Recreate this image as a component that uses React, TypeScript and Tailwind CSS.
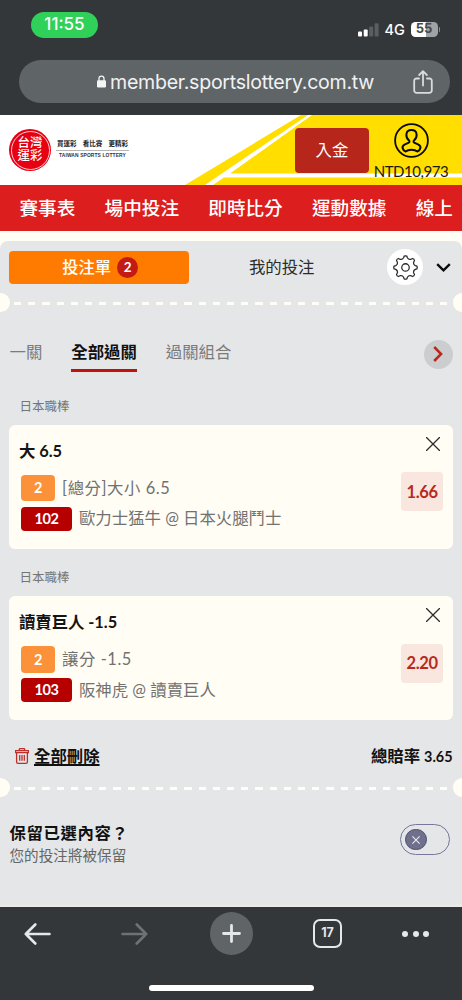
import { Fragment } from "react";
import { clsx } from "clsx";

type Bet = {
  id: string;
  league: string;
  pick: string;
  market: string;
  count: string;
  code: string;
  match: string;
  odds: string;
};

const bets: Bet[] = [
  {
    id: "102",
    league: "日本職棒",
    pick: "大 6.5",
    market: "[總分]大小 6.5",
    count: "2",
    code: "102",
    match: "歐力士猛牛 @ 日本火腿鬥士",
    odds: "1.66",
  },
  {
    id: "103",
    league: "日本職棒",
    pick: "讀賣巨人 -1.5",
    market: "讓分 -1.5",
    count: "2",
    code: "103",
    match: "阪神虎 @ 讀賣巨人",
    odds: "2.20",
  },
];

const navItems = ["賽事表", "場中投注", "即時比分", "運動數據", "線上"];

// 8-tooth gear outline, one tooth every 45 degrees
function gearPath() {
  const points: string[] = [];
  for (let i = 0; i < 8; i++) {
    const a = (i * Math.PI) / 4;
    const at = (r: number, d: number) =>
      `${(12 + r * Math.sin(a + d)).toFixed(2)} ${(12 - r * Math.cos(a + d)).toFixed(2)}`;
    points.push(
      `${i === 0 ? "M" : "L"}${at(11, -0.12)}`,
      `Q${at(11.6, 0)} ${at(11, 0.12)}`,
      `L${at(9.5, 0.19)}`,
      `Q${at(7.8, 0.39)} ${at(9.5, 0.595)}`,
    );
  }
  return points.join(" ") + "Z";
}

function StatusBar() {
  return (
    <div className="flex h-[60px] items-start justify-between pl-[31px] pr-[22px] pt-[12px] font-['Inter',sans-serif] text-white">
      <div className="flex h-[26px] w-[67px] items-center justify-center rounded-full bg-[#30d158] text-[17px] font-medium">
        11:55
      </div>
      <div className="mt-[9px] flex h-4 items-center">
        <svg className="h-[15px] w-[21px]" viewBox="0 0 21 15">
          <rect x="0" y="9.5" width="4" height="5" rx="1" fill="#fff" />
          <rect x="5.7" y="7.5" width="4" height="7" rx="1" fill="#fff" />
          <rect x="11.2" y="4.5" width="4" height="10" rx="1" fill="#5b5e60" />
          <rect x="16.6" y="1.2" width="4" height="13.3" rx="1" fill="#5b5e60" />
        </svg>
        <span className="ml-[6px] w-[26px] pt-px text-[14.5px] font-medium leading-4">4G</span>
        <div className="flex h-[15px] w-[27px] items-center justify-center rounded-[4.5px] bg-[linear-gradient(90deg,#fff_55%,#a0a2a3_55%)] text-[13px] font-bold text-[#45494b]">
          55
        </div>
        <div className="ml-[1px] h-[5px] w-[1.5px] rounded-r-full bg-[#8d8f91]" />
      </div>
    </div>
  );
}

function AddressBar() {
  return (
    <div className="ml-[19px] mr-[12px] flex h-[43px] items-center rounded-full bg-[#5f6467] pl-[78px] pr-[17px] font-['Inter',sans-serif]">
      <svg className="h-[13px] w-[9px]" viewBox="0 0 9 13">
        <path d="M2 6V3.6a2.5 2.5 0 0 1 5 0V6" fill="none" stroke="#f4f5f5" strokeWidth="1.3" />
        <rect x="0" y="5.3" width="9" height="7.2" rx="1.2" fill="#f4f5f5" />
      </svg>
      <span className="ml-[4px] flex-1 whitespace-nowrap text-[19.6px] leading-6 tracking-[-0.27px] text-[#f1f2f2]">
        member.sportslottery.com.tw
      </span>
      <svg
        className="h-[24px] w-[20px]"
        viewBox="0 0 20 24"
        fill="none"
        stroke="#d9dbdd"
        strokeWidth="1.8"
        strokeLinecap="round"
        strokeLinejoin="round"
      >
        <path d="M6 8.5H3.6A2.4 2.4 0 0 0 1.2 11v9.4a2.4 2.4 0 0 0 2.4 2.4h12.8a2.4 2.4 0 0 0 2.4-2.4V11a2.4 2.4 0 0 0-2.4-2.5H14" />
        <path d="M10 15.5V1.4M6.2 5 10 1.2 13.8 5" />
      </svg>
    </div>
  );
}

function SiteHeader() {
  return (
    <header className="relative h-[70px] bg-white">
      <svg className="absolute inset-0 h-[70px] w-[462px]" viewBox="0 0 462 70">
        <path d="M185 70 301 0H462V70Z" fill="#ffde00" />
        <path d="M205 70 308 0H312L230 58.5H462V62.5H224L213 70Z" fill="#fff" />
      </svg>
      <div className="relative flex h-full items-start pl-[9px]">
        <div className="mt-[14px] flex size-[42px] items-center justify-center rounded-full bg-[#e60012]">
          <div className="flex size-[39px] items-center justify-center rounded-full border border-white/80">
            <p className="w-[25px] text-center text-[12.4px] font-medium leading-[12.6px] text-white">
              台灣運彩
            </p>
          </div>
        </div>
        <div className="ml-[5px] mt-[25px] flex w-[73px] flex-col items-center whitespace-nowrap">
          <div className="flex h-[10px] w-[71px] justify-between text-[6.5px] font-bold leading-[8px] text-[#222]">
            <span>買運彩</span>
            <span>看比賽</span>
            <span>更精彩</span>
          </div>
          <div className="h-px w-full bg-[#b5b5b5]" />
          <span className="mt-[1px] font-['Liberation_Sans',sans-serif] text-[4.9px] font-bold leading-[7px] tracking-[0.12px] text-[#333]">
            TAIWAN SPORTS LOTTERY
          </span>
        </div>
        <button
          type="button"
          className="ml-[166px] mt-[12.5px] flex h-[45px] w-[74px] shrink-0 items-center justify-center rounded-[4px] bg-[#b6261b] text-[16.4px] text-white"
        >
          入金
        </button>
        <div className="ml-[2px] mt-[8px] flex w-[80px] flex-col items-center">
          <svg className="size-[35px]" viewBox="0 0 35 35" fill="none" stroke="#0a0a0a">
            <circle cx="17.5" cy="17.5" r="16.4" strokeWidth="1.8" />
            <path
              d="M15 17.6c-1.7-1.5-2.9-3.7-2.6-6.3.3-2.5 2.3-4.2 5.1-4.2s4.8 1.700 5.100 4.200c.3 2.600-.9 4.800-2.600 6.300-.7.6-.6 1.700.2 2.100l3.800 1.700c1.900.9 2.900 2.200 2.300 4-.6 2-1.500 2.700-2.900 3.100-1.600-1.300-3.600-1.800-5.900-1.800s-4.300.5-5.900 1.800c-1.400-.4-2.300-1.100-2.900-3.100-.6-1.800.4-3.100 2.300-4l3.800-1.700c.8-.4.9-1.500.2-2.100Z"
              strokeWidth="2"
              strokeLinejoin="round"
            />
          </svg>
          <span className="text-[15px] leading-[26px] tracking-[-0.45px] text-[#1a1a00]">NTD10,973</span>
        </div>
      </div>
    </header>
  );
}

function NavBar() {
  return (
    <nav className="flex h-[46px] items-center gap-[29.3px] overflow-hidden whitespace-nowrap bg-[#dc1e1e] pl-[19.5px] pt-[1px] text-[18.6px] font-medium text-white">
      {navItems.map((item) => (
        <span key={item}>{item}</span>
      ))}
    </nav>
  );
}

// Ticket-style tear line with a half circle cut out on each side
function TearLine() {
  return (
    <div className="flex h-[19px] items-center justify-between">
      <div className="h-[19px] w-[9.5px] rounded-r-full bg-[#fffdf4]" />
      <div className="ml-[4.5px] mt-[2px] h-[2.5px] flex-1 bg-[repeating-linear-gradient(90deg,#fffdf4_0_7.2px,transparent_7.2px_14.2px)]" />
      <div className="h-[19px] w-[9.5px] rounded-l-full bg-[#fffdf4]" />
    </div>
  );
}

function BetCard({ bet }: { bet: Bet }) {
  return (
    <div className="mx-[9.4px] flex h-[124px] justify-between rounded-[6px] bg-[#fffdf4] pl-[9.6px] pr-[9.5px]">
      <div className="flex flex-col items-start whitespace-nowrap">
        <h3 className="mt-[14px] h-[24px] text-[16.4px] font-bold leading-[24px] tracking-[-0.05px] text-[#151515]">
          {bet.pick}
        </h3>
        <div className="ml-[2px] mt-[12px] flex h-[27px] items-center">
          <span className="flex h-[26.5px] w-[34.5px] items-center justify-center rounded-[4px] bg-[#fb923a] text-[14.5px] font-bold text-white">
            {bet.count}
          </span>
          <span className="ml-[6.6px] text-[16.4px] tracking-[0.55px] text-[#717171]">{bet.market}</span>
        </div>
        <div className="ml-[2px] mt-[5px] flex h-[24px] items-center">
          <span className="flex h-[24px] w-[51px] items-center justify-center rounded-[4px] bg-[#b60000] text-[14.5px] font-bold tracking-[-0.4px] text-white">
            {bet.code}
          </span>
          <span className="ml-[7px] text-[16.4px] text-[#717171]">{bet.match}</span>
        </div>
      </div>
      <div className="flex flex-col items-end">
        <svg
          className="mr-[3px] mt-[12px] size-[14px]"
          viewBox="0 0 14 14"
          stroke="#2b2b2b"
          strokeWidth="1.3"
          strokeLinecap="round"
        >
          <path d="m.5.5 13 13M13.5.5l-13 13" />
        </svg>
        <div className="mt-[21.5px] flex h-[39px] w-[42px] items-center justify-center rounded-[4px] bg-[#f8e6df] pt-px text-[16.5px] font-bold tracking-[-0.3px] text-[#b8291e]">
          {bet.odds}
        </div>
      </div>
    </div>
  );
}

function BetSlip() {
  const tabs = ["一關", "全部過關", "過關組合"];
  const activeTab = "全部過關";

  return (
    <main className="h-[676px] bg-[#fffdf4] pt-[10px]">
      <div className="flex h-[666px] flex-col rounded-t-[8px] bg-[#e4e6e8]">
        <div className="flex h-[52px] items-center pl-[9.4px]">
          <div className="flex h-[33px] w-[179.5px] items-center justify-center gap-[6px] rounded-[4px] bg-[#ff7b00] pl-[2px] text-[16.3px] font-medium text-white">
            投注單
            <span className="flex size-[21px] items-center justify-center rounded-full bg-[#c41a14] text-[13.5px] font-bold">
              2
            </span>
          </div>
          <span className="ml-[60px] w-[138.2px] text-[16.4px] text-[#2c2c2c]">我的投注</span>
          <div className="flex size-[36px] items-center justify-center rounded-full bg-white">
            <svg
              className="size-[25px]"
              viewBox="0 0 24 24"
              fill="none"
              stroke="#2a2a2a"
              strokeWidth="1.2"
              strokeLinejoin="round"
            >
              <path d={gearPath()} />
              <circle cx="12" cy="12" r="3.6" />
            </svg>
          </div>
          <svg
            className="ml-[13px] h-[9px] w-[15px]"
            viewBox="0 0 15 9"
            fill="none"
            stroke="#0c0c0c"
            strokeWidth="2.4"
          >
            <path d="M1.2 1.2 7.5 7.3 13.8 1.2" />
          </svg>
        </div>
        <TearLine />

        {/* Parlay tabs */}
        <div className="mt-[27px] flex h-[33px] items-start gap-[29px] pl-[9.5px] text-[16.4px] leading-[26px]">
          {tabs.map((tab) => (
            <div
              key={tab}
              className={clsx(
                "h-[33px] border-b-[3.5px]",
                tab === activeTab
                  ? "border-[#c0120f] font-bold text-[#111]"
                  : "border-transparent text-[#7b7b7b]",
              )}
            >
              {tab}
            </div>
          ))}
          <div className="ml-auto mr-[9.5px] mt-[1px] flex size-[28.5px] items-center justify-center rounded-full bg-[#cbcdcf]">
            <svg
              className="h-[16px] w-[10px]"
              viewBox="0 0 10 16"
              fill="none"
              stroke="#b9271d"
              strokeWidth="2.5"
            >
              <path d="m1.2 1 6.9 7-6.9 7" />
            </svg>
          </div>
        </div>

        <div className="mt-[5px]">
          {bets.map((bet) => (
            <Fragment key={bet.id}>
              <p className="h-[47.5px] pl-[19.5px] pt-[15.5px] text-[12.5px] leading-[28px] text-[#757575]">
                {bet.league}
              </p>
              <BetCard bet={bet} />
            </Fragment>
          ))}
        </div>

        <div className="mt-[17px] flex h-[41px] items-start justify-between pl-[15px] pr-[9.5px] font-bold leading-[38px]">
          <div className="flex items-center gap-[5px]">
            <svg
              className="h-[16px] w-[14px]"
              viewBox="0 0 14 16"
              fill="none"
              stroke="#bd3029"
              strokeWidth="1.3"
            >
              <path d="M.6 2.7h12.8v2H.6ZM4.3 2.7V1.4q0-.8.8-.8h3.8q.8 0 .8.8v1.3M1.6 4.7V14q0 1.3 1.3 1.3h8.2q1.3 0 1.3-1.3V4.7M4.7 7v5.7M7 7v5.7M9.3 7v5.7" />
            </svg>
            <span className="text-[16.4px] text-[#111] underline decoration-2 underline-offset-[2px]">
              全部刪除
            </span>
          </div>
          <span className="text-[16.4px] text-[#111]">
            總賠率 <span className="text-[14.4px]">3.65</span>
          </span>
        </div>
        <TearLine />

        {/* Keep selections */}
        <div className="mt-[24px] flex items-start justify-between pl-[9.5px] pr-[12px]">
          <div>
            <p className="text-[16.4px] font-bold leading-[24px] tracking-[0.6px] text-[#111]">
              保留已選內容？
            </p>
            <p className="text-[14.6px] leading-[21px] text-[#666]">您的投注將被保留</p>
          </div>
          <div className="mt-[3px] flex h-[31px] w-[50px] items-center rounded-full border border-[#77759a] pl-[4px]">
            <div className="flex size-[21.5px] items-center justify-center rounded-full border border-[#4c4a70] bg-[#706f8c]">
              <svg className="size-[8px]" viewBox="0 0 8 8" stroke="#e6e6ee" strokeWidth="1.2">
                <path d="m.4.4 7.2 7.2M7.6.4.4 7.6" />
              </svg>
            </div>
          </div>
        </div>
        <div className="mt-auto h-[4px] bg-linear-to-b from-transparent to-[#ececea]" />
      </div>
    </main>
  );
}

function BrowserToolbar() {
  return (
    <footer className="h-[93px] bg-[#33373a] pt-[5px]">
      <div className="flex h-[43px] items-center pl-[24px]">
        <svg
          className="h-[22px] w-[27px]"
          viewBox="0 0 27 22"
          fill="none"
          stroke="#e5e7ea"
          strokeWidth="2.6"
          strokeLinecap="round"
          strokeLinejoin="round"
        >
          <path d="M25.5 11H1.8M11.3 1.5 1.8 11l9.5 9.5" />
        </svg>
        <svg
          className="ml-[70px] h-[22px] w-[27px]"
          viewBox="0 0 27 22"
          fill="none"
          stroke="#6f7274"
          strokeWidth="2.6"
          strokeLinecap="round"
          strokeLinejoin="round"
        >
          <path d="M1.5 11h23.7M15.7 1.5l9.5 9.5-9.5 9.5" />
        </svg>
        <div className="ml-[61.5px] flex size-[43px] items-center justify-center rounded-full bg-[#5f6467]">
          <svg
            className="size-[19px]"
            viewBox="0 0 19 19"
            stroke="#e5e7ea"
            strokeWidth="2.8"
            strokeLinecap="round"
          >
            <path d="M9.5 1.5v16M1.5 9.5h16" />
          </svg>
        </div>
        <div className="ml-[60.5px] flex size-[29px] items-center justify-center rounded-[7px] border-[2.5px] border-[#e5e7ea] font-['Inter',sans-serif] text-[12.5px] font-bold text-[#e5e7ea]">
          17
        </div>
        <div className="ml-[60px] flex gap-[4.6px]">
          <span className="size-[6px] rounded-full bg-[#e5e7ea]" />
          <span className="size-[6px] rounded-full bg-[#e5e7ea]" />
          <span className="size-[6px] rounded-full bg-[#e5e7ea]" />
        </div>
      </div>
      <div className="mx-auto mt-[29.5px] h-[6px] w-[165px] rounded-full bg-white" />
    </footer>
  );
}

export default function App() {
  return (
    <div className="h-[1000px] w-[462px] overflow-hidden bg-[#33373a] font-['Lato','Noto_Sans_CJK_TC',sans-serif]">
      <div className="h-[115px]">
        <StatusBar />
        <AddressBar />
      </div>
      <SiteHeader />
      <NavBar />
      <BetSlip />
      <BrowserToolbar />
    </div>
  );
}
